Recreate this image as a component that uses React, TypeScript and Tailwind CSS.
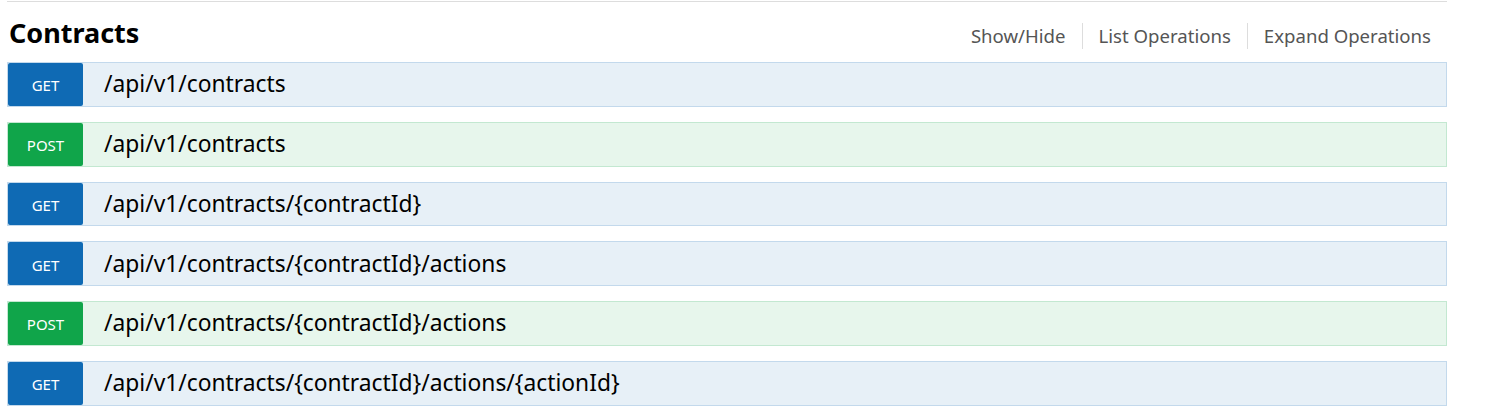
import React from "react";

const rows: { method: "GET" | "POST"; path: string }[] = [
  { method: "GET", path: "/api/v1/contracts" },
  { method: "POST", path: "/api/v1/contracts" },
  { method: "GET", path: "/api/v1/contracts/{contractId}" },
  { method: "GET", path: "/api/v1/contracts/{contractId}/actions" },
  { method: "POST", path: "/api/v1/contracts/{contractId}/actions" },
  { method: "GET", path: "/api/v1/contracts/{contractId}/actions/{actionId}" },
];

export default function App() {
  return (
    <div
      className="w-[1501px] h-[415px] bg-white overflow-hidden"
      style={{ fontFamily: '"Noto Sans", "Open Sans", sans-serif' }}
    >
      <div className="ml-[7px] w-[1440px] mt-px border-t border-[#dddddd]">
        <div className="flex items-center justify-between h-[60px]">
          <h2 className="pl-[2px] text-[27px] leading-none font-bold text-black">Contracts</h2>
          <ul className="flex items-center text-[18.6px] text-[#555555] pr-[16px] pt-[8px]">
            <li className="px-[16px] leading-[26px]">Show/Hide</li>
            <li className="px-[16px] leading-[26px] border-l border-[#dddddd]">List Operations</li>
            <li className="pl-[16px] leading-[26px] border-l border-[#dddddd]">Expand Operations</li>
          </ul>
        </div>
        <div className="flex flex-col gap-[15px]">
          {rows.map((r, i) => {
            const isGet = r.method === "GET";
            return (
              <div
                key={i}
                className={
                  "flex items-stretch h-[44.8px] border " +
                  (isGet ? "bg-[#e7f0f7] border-[#c3d9ec]" : "bg-[#e7f6ec] border-[#c3e8d1]")
                }
              >
                <span
                  className={
                    "w-[75px] flex items-center justify-center rounded-[2px] text-white text-[15px] pt-[2px] " +
                    (isGet ? "bg-[#0f6ab4]" : "bg-[#10a54a]")
                  }
                >
                  {r.method}
                </span>
                <span className="flex items-center pl-[21px] text-[22.8px] text-black">{r.path}</span>
              </div>
            );
          })}
        </div>
      </div>
    </div>
  );
}
